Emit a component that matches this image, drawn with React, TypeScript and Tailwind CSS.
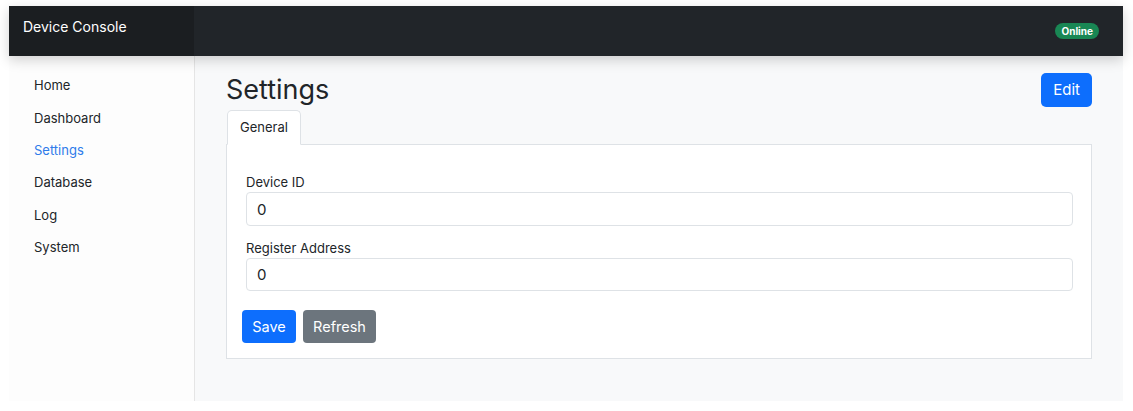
import React, { useState } from 'react';

const navItems = ['Home', 'Dashboard', 'Settings', 'Database', 'Log', 'System'];

const App: React.FC = () => {
    const [active, setActive] = useState('Settings');
    const [deviceId, setDeviceId] = useState('0');
    const [registerAddress, setRegisterAddress] = useState('0');

    return (
        <div
            className="bg-white h-[411px] pt-[6px] pl-[9px] pr-[10px] pb-[10px] text-[#212529]"
            style={{ fontFamily: 'Inter, "Noto Sans", sans-serif' }}
        >
            <div className="flex flex-col h-full">
                {/* Top bar */}
                <header className="relative z-10 flex h-[50px] shrink-0 bg-[#212529] shadow-[0_4px_12px_rgba(0,0,0,0.18)]">
                    <div className="w-[185px] bg-[#1b1e21] pl-[14px] pt-[12px] text-white text-[14px] leading-[18px]">
                        Device Console
                    </div>
                    <div className="flex-1 flex items-center justify-end pr-[24px]">
                        <span className="bg-[#198754] text-white text-[10px] font-bold leading-[16px] px-[6px] rounded-full">
                            Online
                        </span>
                    </div>
                </header>

                <div className="flex flex-1 min-h-0">
                    {/* Sidebar */}
                    <nav className="w-[186px] shrink-0 bg-[#fdfdfd] border-r border-[#e5e5e5] pt-[14px] pl-[25px]">
                        {navItems.map(item => (
                            <div
                                key={item}
                                onClick={() => setActive(item)}
                                className={`h-[32.3px] flex items-center text-[13px] cursor-pointer ${active === item ? 'text-[#2f7bea]' : 'text-[#212529]'}`}
                            >
                                {item}
                            </div>
                        ))}
                    </nav>

                    {/* Main */}
                    <main className="flex-1 bg-[#f8f9fa] pl-[31px] pr-[31px] pt-[17px]">
                        <div className="flex items-center justify-between h-[34px] mb-[3px]">
                            <h1 className="text-[27px] leading-none font-normal -mt-[2px]">Settings</h1>
                            <button className="bg-[#0d6efd] text-white text-[15px] h-[34px] px-[12px] rounded-[5px]">
                                Edit
                            </button>
                        </div>

                        <div className="flex pl-px">
                            <div className="relative z-10 -mb-px bg-white border border-[#dee2e6] border-b-white rounded-t-[5px] w-[74px] h-[35px] flex items-center justify-center text-[13px]">
                                General
                            </div>
                        </div>

                        <div className="bg-white border border-[#dee2e6] pt-[28px] pb-[15px] px-[15px]">
                            <div className="pl-[4px] pr-[3px]">
                                <label className="block text-[13px] leading-[19px]">Device ID</label>
                                <input
                                    value={deviceId}
                                    onChange={e => setDeviceId(e.target.value)}
                                    className="block w-full h-[34px] border border-[#dee2e6] rounded-[4px] px-[10px] text-[15px] outline-none"
                                />
                                <label className="block text-[13px] leading-[19px] mt-[13px]">Register Address</label>
                                <input
                                    value={registerAddress}
                                    onChange={e => setRegisterAddress(e.target.value)}
                                    className="block w-full h-[33px] border border-[#dee2e6] rounded-[4px] px-[10px] text-[15px] outline-none"
                                />
                            </div>
                            <div className="flex gap-[7px] mt-[19px]">
                                <button className="bg-[#0d6efd] text-white text-[14.5px] h-[33px] w-[54px] rounded-[4px]">
                                    Save
                                </button>
                                <button className="bg-[#6c757d] text-white text-[14.5px] h-[33px] w-[73px] rounded-[4px]">
                                    Refresh
                                </button>
                            </div>
                        </div>
                    </main>
                </div>
            </div>
        </div>
    );
};

export default App;
